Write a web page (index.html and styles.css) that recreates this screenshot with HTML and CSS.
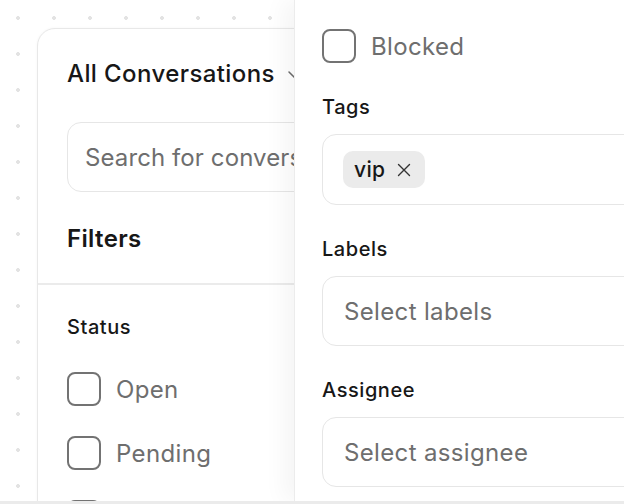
FILE: index.html
```html
<!DOCTYPE html>
<html lang="en">
<head>
    <meta charset="UTF-8">
    <meta name="viewport" content="width=device-width, initial-scale=1.0">
    <title>Conversations - Filters</title>
    <link rel="stylesheet" href="styles.css">
</head>
<body>
    <div class="stage">
        <section class="inbox-card">
            <header class="card-head">
                <div class="title-row">
                    <h1>All Conversations</h1>
                    <svg class="chevron" width="16" height="16" viewBox="0 0 16 16" fill="none">
                        <path d="M2 5l6 6 6-6" stroke="currentColor" stroke-width="1.5" stroke-linecap="round" stroke-linejoin="round"/>
                    </svg>
                </div>
                <input type="text" class="search-field" placeholder="Search for conversations...">
                <h2>Filters</h2>
            </header>

            <div class="card-body">
                <h3 class="field-label">Status</h3>
                <div class="check-list">
                    <label class="check"><span class="box"></span>Open</label>
                    <label class="check"><span class="box"></span>Pending</label>
                    <label class="check" aria-label="Closed"><span class="box"></span></label>
                </div>
            </div>
        </section>

        <!-- filter sheet, slides over the list -->
        <aside class="sheet">
            <label class="check"><span class="box"></span>Blocked</label>

            <div class="field">
                <h3 class="field-label">Tags</h3>
                <div class="tag-field">
                    <span class="chip">vip
                        <svg class="chip-x" width="14" height="14" viewBox="0 0 14 14" fill="none">
                            <path d="M1.5 1.5l11 11M12.5 1.5l-11 11" stroke="currentColor" stroke-width="1.4" stroke-linecap="round"/>
                        </svg>
                    </span>
                </div>
            </div>

            <div class="field">
                <h3 class="field-label">Labels</h3>
                <div class="select-field">Select labels</div>
            </div>

            <div class="field">
                <h3 class="field-label">Assignee</h3>
                <div class="select-field">Select assignee</div>
            </div>
        </aside>
    </div>
    <div class="edge"></div>
</body>
</html>
```

FILE: styles.css
```css
/* Reset */
* {
    margin: 0;
    padding: 0;
    box-sizing: border-box;
}

body {
    font-family: Inter, "Noto Sans", sans-serif;
    letter-spacing: 0.35px;
    color: #171717;
    background: #ffffff;
    overflow: hidden;
}

/* Dotted canvas */
.stage {
    position: relative;
    height: 501px;
    overflow: hidden;
    padding: 28px 0 0 37px;
    background-color: #ffffff;
    background-image: radial-gradient(circle at 18px 18px, #e3e3e3 1.6px, transparent 2.2px);
    background-size: 36px 36px;
}

.edge {
    height: 3px;
    background: #ebebeb;
}

/* Conversation list card */
.inbox-card {
    width: 400px;
    height: 600px;
    background: #ffffff;
    border: 1px solid #e8e8e8;
    border-radius: 18px;
    box-shadow: 0 0 3px rgba(0, 0, 0, 0.04);
}

.card-head {
    padding: 29px 29px 28px;
    border-bottom: 2px solid #ebebeb;
}

.title-row {
    display: flex;
    align-items: center;
    gap: 12px;
    height: 32px;
}

h1 {
    font-size: 24px;
    line-height: 32px;
    font-weight: 500;
    letter-spacing: 0.4px;
}

.chevron {
    color: #6b6b6b;
    margin-top: 2px;
}

.search-field {
    display: block;
    width: 100%;
    height: 70px;
    margin-top: 32px;
    padding: 0 17px;
    font-family: inherit;
    font-size: 24px;
    letter-spacing: 0.1px;
    color: #171717;
    border: 1px solid #e6e6e6;
    border-radius: 14px;
    outline: none;
}

.search-field::placeholder {
    color: #6e6e6e;
}

h2 {
    margin-top: 31px;
    font-size: 24px;
    line-height: 32px;
    font-weight: 600;
}

.card-body {
    padding: 28px 29px 0;
}

.field-label {
    font-size: 20px;
    line-height: 28px;
    font-weight: 500;
    letter-spacing: 0.55px;
    color: #171717;
}

.card-body .check-list {
    margin-top: 31px;
    display: flex;
    flex-direction: column;
    gap: 30px;
}

/* Checkbox rows */
.check {
    display: flex;
    align-items: center;
    gap: 15px;
    height: 34px;
    font-size: 24px;
    color: #6e6e6e;
    cursor: pointer;
}

.box {
    width: 34px;
    height: 34px;
    flex: none;
    border: 2px solid #737373;
    border-radius: 8px;
    background: #ffffff;
}

/* Filter sheet */
.sheet {
    position: absolute;
    top: 0;
    left: 294px;
    bottom: 0;
    width: 420px;
    padding: 29px 0 0 27px;
    background: #ffffff;
    border-left: 1px solid #ececec;
    box-shadow: -10px 0 22px rgba(0, 0, 0, 0.045);
}

.field {
    margin-top: 30px;
}

.field .field-label {
    margin-bottom: 13px;
}

.tag-field,
.select-field {
    width: 380px;
    border: 1px solid #e6e6e6;
    border-radius: 14px;
}

.tag-field {
    padding: 16px 20px;
    display: flex;
}

.chip {
    display: inline-flex;
    align-items: center;
    gap: 12px;
    height: 37px;
    padding: 0 14px 0 11px;
    background: #ebebeb;
    border-radius: 10px;
    font-size: 21px;
    font-weight: 500;
    color: #171717;
}

.chip-x {
    color: #333333;
}

.select-field {
    height: 70px;
    padding: 0 21px;
    display: flex;
    align-items: center;
    font-size: 24px;
    color: #6e6e6e;
}
```
